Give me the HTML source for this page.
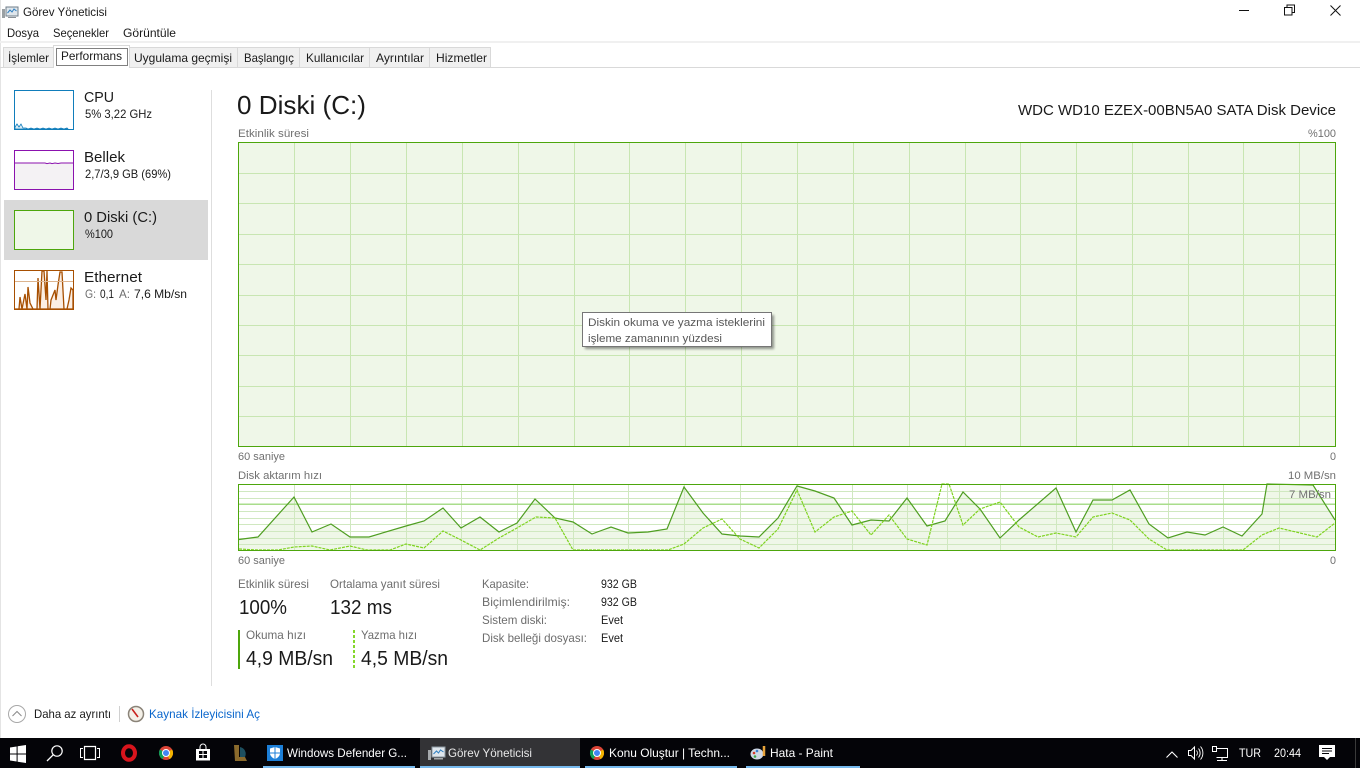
<!DOCTYPE html>
<html lang="tr"><head><meta charset="utf-8"><title>Görev Yöneticisi</title>
<style>
html,body{margin:0;padding:0;background:#fff;overflow:hidden}
svg{display:block}
text{font-family:"Liberation Sans",sans-serif;font-size:12px;fill:#1a1a1a}
.g{fill:#707070;font-size:11px}
.l{fill:#6d6d6d;font-size:12px}
.w{fill:#fff;font-size:12px}
.v{fill:#1a1a1a;font-size:20px}
</style></head><body>
<svg width="1360" height="768" viewBox="0 0 1360 768" xmlns="http://www.w3.org/2000/svg">
<defs><filter id="b" x="-10%" y="-30%" width="120%" height="160%"><feGaussianBlur stdDeviation="1.2"/></filter></defs>
<rect width="1360" height="768" fill="#fff"/>
<rect x="0" y="0" width="1" height="738" fill="#e4e4e4"/>

<!-- title bar -->
<g>
<rect x="6" y="7" width="12" height="9" fill="#dfe6ec" stroke="#6f7d88"/>
<path d="M7.5 13l2.5-3 2 2 2-3 2.5 2" fill="none" stroke="#2f7fc0"/>
<rect x="2" y="9" width="3" height="9" fill="#9aa0a3"/>
<rect x="8" y="17" width="8" height="1" fill="#8a9096"/>
</g>
<text x="23" y="16" textLength="84" lengthAdjust="spacingAndGlyphs">Görev Yöneticisi</text>
<path d="M1239 10.5h10" stroke="#111" fill="none"/>
<path d="M1284.5 7.5h7.5v7.5h-7.5zM1287 7.5v-2.5h7.5v7.5h-2.5" stroke="#111" fill="none"/>
<path d="M1330.5 5.5l10 10M1340.5 5.5l-10 10" stroke="#111" fill="none"/>

<!-- menu -->
<text x="7" y="37" textLength="32" lengthAdjust="spacingAndGlyphs">Dosya</text>
<text x="53" y="37" textLength="56" lengthAdjust="spacingAndGlyphs">Seçenekler</text>
<text x="123" y="37" textLength="53" lengthAdjust="spacingAndGlyphs">Görüntüle</text>
<rect x="0" y="41" width="1360" height="2" fill="#f0f0f0"/>

<!-- tabs -->
<rect x="0" y="67" width="1360" height="1" fill="#d9d9d9"/>
<g fill="#f0f0f0" stroke="#d9d9d9">
<rect x="3.5" y="47.5" width="50" height="20"/>
<rect x="129.5" y="47.5" width="108" height="20"/>
<rect x="237.5" y="47.5" width="62" height="20"/>
<rect x="299.5" y="47.5" width="70" height="20"/>
<rect x="369.5" y="47.5" width="60" height="20"/>
<rect x="429.5" y="47.5" width="61" height="20"/>
</g>
<path d="M53.5 68V45.5h76V68" fill="#fff" stroke="#d9d9d9"/>
<rect x="56.5" y="48.5" width="71" height="17" fill="none" stroke="#000" stroke-dasharray="1 1"/>
<text x="8" y="62" textLength="41" lengthAdjust="spacingAndGlyphs">İşlemler</text>
<text x="61" y="60" textLength="61" lengthAdjust="spacingAndGlyphs">Performans</text>
<text x="134" y="62" textLength="98" lengthAdjust="spacingAndGlyphs">Uygulama geçmişi</text>
<text x="244" y="62" textLength="50" lengthAdjust="spacingAndGlyphs">Başlangıç</text>
<text x="306" y="62" textLength="58" lengthAdjust="spacingAndGlyphs">Kullanıcılar</text>
<text x="376" y="62" textLength="48" lengthAdjust="spacingAndGlyphs">Ayrıntılar</text>
<text x="436" y="62" textLength="51" lengthAdjust="spacingAndGlyphs">Hizmetler</text>

<!-- sidebar -->
<rect x="4" y="200" width="204" height="60" fill="#d9d9d9"/>
<rect x="211" y="90" width="1" height="596" fill="#dedede"/>

<rect x="14.5" y="90.5" width="59" height="39" fill="#fff" stroke="#117dbb"/>
<path d="M15 129V127l2-3 2 3 2-3 2 4 3 0 2 1 3-1 3 1 3-1 3 1 3-1 3 1 3-1 3 1 3-1 3 1 3-1 3 1 3-1 1 1V129z" fill="#d9ebf5" stroke="#117dbb" stroke-width=".8"/>
<rect x="14.5" y="150.5" width="59" height="39" fill="#fff" stroke="#8b12ae"/>
<path d="M15 163H45l2 .6 3-.6 2 .6 3-.6 3 .5 3-.5H73V189H15z" fill="#f4f2f4" stroke="none"/>
<path d="M15 163H45l2 .6 3-.6 2 .6 3-.6 3 .5 3-.5H73" fill="none" stroke="#8b12ae"/>
<rect x="14.5" y="210.5" width="59" height="39" fill="#eff7e8" stroke="#4da60c"/>
<rect x="14.5" y="270.5" width="59" height="39" fill="#fff" stroke="#a74f01"/>
<path d="M15 309h4l1-12 2 12 3-15 2 15 1-22 2 16 3 6h4l1-31 2 31 2-38h2l2 29 1-29 1 38h2l1-9 2-5 2-5 1 10 2-15 2-13h2l2 37h3l2-9 2-12 2 2V309z" fill="#fbeee3" stroke="#a74f01" stroke-width="1.3"/>
<path d="M15 281.5h58" stroke="#dcb48f" fill="none"/>

<text x="84" y="102" style="font-size:15px" textLength="30" lengthAdjust="spacingAndGlyphs">CPU</text>
<text x="85" y="118" textLength="67" lengthAdjust="spacingAndGlyphs">5% 3,22 GHz</text>
<text x="84" y="162" style="font-size:15px" textLength="41" lengthAdjust="spacingAndGlyphs">Bellek</text>
<text x="85" y="178" textLength="86" lengthAdjust="spacingAndGlyphs">2,7/3,9 GB (69%)</text>
<text x="84" y="222" style="font-size:15px" textLength="73" lengthAdjust="spacingAndGlyphs">0 Diski (C:)</text>
<text x="85" y="238" textLength="28" lengthAdjust="spacingAndGlyphs">%100</text>
<text x="84" y="282" style="font-size:15px" textLength="58" lengthAdjust="spacingAndGlyphs">Ethernet</text>
<text x="85" y="298" class="l" textLength="11" lengthAdjust="spacingAndGlyphs">G:</text>
<text x="100" y="298" textLength="14" lengthAdjust="spacingAndGlyphs">0,1</text>
<text x="119" y="298" class="l" textLength="11" lengthAdjust="spacingAndGlyphs">A:</text>
<text x="134" y="298" textLength="53" lengthAdjust="spacingAndGlyphs">7,6 Mb/sn</text>

<!-- header -->
<text x="237" y="114" style="font-size:26px" textLength="129" lengthAdjust="spacingAndGlyphs">0 Diski (C:)</text>
<text x="1018" y="115" style="font-size:15px" textLength="318" lengthAdjust="spacingAndGlyphs">WDC WD10 EZEX-00BN5A0 SATA Disk Device</text>

<!-- chart 1 -->
<text x="238" y="137" class="g" textLength="71" lengthAdjust="spacingAndGlyphs">Etkinlik süresi</text>
<text x="1308" y="137" class="g" textLength="28" lengthAdjust="spacingAndGlyphs">%100</text>
<rect x="238.5" y="142.5" width="1097" height="304" fill="#eff7e8"/>
<path d="M294.5 143V446M350.5 143V446M406.5 143V446M462.5 143V446M518.5 143V446M574.5 143V446M629.5 143V446M685.5 143V446M741.5 143V446M797.5 143V446M853.5 143V446M909.5 143V446M965.5 143V446M1020.5 143V446M1076.5 143V446M1132.5 143V446M1188.5 143V446M1243.5 143V446M1299.5 143V446M239 173.5H1335M239 203.5H1335M239 234.5H1335M239 264.5H1335M239 295.5H1335M239 325.5H1335M239 355.5H1335M239 386.5H1335M239 416.5H1335" stroke="#c8e6b2" fill="none"/>
<rect x="238.5" y="142.5" width="1097" height="304" fill="none" stroke="#4da60c"/>
<text x="238" y="460" class="g" textLength="47" lengthAdjust="spacingAndGlyphs">60 saniye</text>
<text x="1330" y="460" class="g" textLength="6" lengthAdjust="spacingAndGlyphs">0</text>

<!-- tooltip -->
<rect x="585" y="315" width="189" height="34" fill="#000" opacity=".4" filter="url(#b)"/>
<rect x="582.5" y="312.5" width="189" height="34" fill="#fff" stroke="#767676"/>
<text x="588" y="326" class="g" style="fill:#575757" textLength="177" lengthAdjust="spacingAndGlyphs">Diskin okuma ve yazma isteklerini</text>
<text x="588" y="342" class="g" style="fill:#575757" textLength="134" lengthAdjust="spacingAndGlyphs">işleme zamanının yüzdesi</text>

<!-- chart 2 -->
<text x="238" y="479" class="g" textLength="84" lengthAdjust="spacingAndGlyphs">Disk aktarım hızı</text>
<text x="1288" y="479" class="g" textLength="48" lengthAdjust="spacingAndGlyphs">10 MB/sn</text>
<path d="M239 539.5L258 537L294 497L312 532L331 524L350 537L369 537L406 526L424 521L443 508L461 528L480 517L499 532L517 523L535 499L555 518L573 522L592 534L600 531L611 527L628 533L648 532L667 529L684 487L703 513L722 534L740 536L759 537L778 518L797 486L815 491L834 498L852 525L871 520L889 521L907 498L927 526L945 521L963 492L980 509L1000 538L1019 520L1056 488L1076 532L1093 500L1112 500L1130 490L1149 524L1168 538L1187 532L1205 535L1223 527L1242 536L1262 514L1267 484L1313 485L1335 520V550H239z" fill="#eff7e8"/>
<path d="M294.5 485V550M350.5 485V550M406.5 485V550M461.5 485V550M517.5 485V550M573.5 485V550M628.5 485V550M684.5 485V550M740.5 485V550M797.5 485V550M852.5 485V550M907.5 485V550M947.5 485V550M1000.5 485V550M1056.5 485V550M1112.5 485V550M1168.5 485V550M1223.5 485V550M1279.5 485V550M239 491.5H1335M239 498.5H1335M239 511.5H1335M239 518.5H1335M239 524.5H1335M239 531.5H1335M239 538.5H1335M239 544.5H1335" stroke="#d0e8c0" fill="none"/>
<rect x="239" y="503.500" width="1096" height="1.500" fill="#a9dd8c"/>
<path d="M239 539.5L258 537L294 497L312 532L331 524L350 537L369 537L406 526L424 521L443 508L461 528L480 517L499 532L517 523L535 499L555 518L573 522L592 534L600 531L611 527L628 533L648 532L667 529L684 487L703 513L722 534L740 536L759 537L778 518L797 486L815 491L834 498L852 525L871 520L889 521L907 498L927 526L945 521L963 492L980 509L1000 538L1019 520L1056 488L1076 532L1093 500L1112 500L1130 490L1149 524L1168 538L1187 532L1205 535L1223 527L1242 536L1262 514L1267 484L1313 485L1335 520" fill="none" stroke="#4f9e22" stroke-width="1.200"/>
<path d="M239 549L258 550L278 550L294 547L312 546L330 550L350 546L367 550L390 550L406 544L424 548L443 531L461 540L480 550L499 538L517 528L536 517L555 518L573 550L592 550L620 550L668 550L684 544L703 528L722 519L740 539L759 548L778 529L797 490L815 532L834 517L852 511L871 535L889 515L907 539L927 545L942 484L949 484L963 525L980 509L1000 502L1019 527L1038 537L1056 533L1076 537L1093 517L1112 513L1130 520L1149 539L1167 550L1197 550L1243 550L1262 535L1279 528L1317 537L1335 523" fill="none" stroke="#7fd320" stroke-width="1.200" stroke-dasharray="3 1"/>
<rect x="238.5" y="484.5" width="1097" height="66" fill="none" stroke="#4da60c"/>
<text x="1289" y="498" class="g" textLength="42" lengthAdjust="spacingAndGlyphs">7 MB/sn</text>
<text x="238" y="564" class="g" textLength="47" lengthAdjust="spacingAndGlyphs">60 saniye</text>
<text x="1330" y="564" class="g" textLength="6" lengthAdjust="spacingAndGlyphs">0</text>

<!-- stats -->
<text x="238" y="588" class="l" textLength="71" lengthAdjust="spacingAndGlyphs">Etkinlik süresi</text>
<text x="330" y="588" class="l" textLength="110" lengthAdjust="spacingAndGlyphs">Ortalama yanıt süresi</text>
<text x="239" y="614" class="v" textLength="48" lengthAdjust="spacingAndGlyphs">100%</text>
<text x="330" y="614" class="v" textLength="62" lengthAdjust="spacingAndGlyphs">132 ms</text>
<rect x="238" y="630" width="2" height="39" fill="#4da60c"/>
<path d="M354 630V669" stroke="#86d62c" stroke-width="2" stroke-dasharray="3 2" fill="none"/>
<text x="246" y="639" class="l" textLength="60" lengthAdjust="spacingAndGlyphs">Okuma hızı</text>
<text x="361" y="639" class="l" textLength="56" lengthAdjust="spacingAndGlyphs">Yazma hızı</text>
<text x="246" y="665" class="v" textLength="87" lengthAdjust="spacingAndGlyphs">4,9 MB/sn</text>
<text x="361" y="665" class="v" textLength="87" lengthAdjust="spacingAndGlyphs">4,5 MB/sn</text>
<text x="482" y="588" class="l" textLength="47" lengthAdjust="spacingAndGlyphs">Kapasite:</text>
<text x="482" y="606" class="l" textLength="88" lengthAdjust="spacingAndGlyphs">Biçimlendirilmiş:</text>
<text x="482" y="624" class="l" textLength="65" lengthAdjust="spacingAndGlyphs">Sistem diski:</text>
<text x="482" y="642" class="l" textLength="105" lengthAdjust="spacingAndGlyphs">Disk belleği dosyası:</text>
<text x="601" y="588" textLength="36" lengthAdjust="spacingAndGlyphs">932 GB</text>
<text x="601" y="606" textLength="36" lengthAdjust="spacingAndGlyphs">932 GB</text>
<text x="601" y="624" textLength="22" lengthAdjust="spacingAndGlyphs">Evet</text>
<text x="601" y="642" textLength="22" lengthAdjust="spacingAndGlyphs">Evet</text>

<!-- footer -->
<circle cx="17" cy="714" r="8.5" fill="#fff" stroke="#a8a8a8"/>
<path d="M12.5 716l4.5-4.5 4.5 4.5" fill="none" stroke="#8a8a8a"/>
<text x="34" y="718" textLength="77" lengthAdjust="spacingAndGlyphs">Daha az ayrıntı</text>
<rect x="119" y="706" width="1" height="16" fill="#d0d0d0"/>
<circle cx="136" cy="714" r="7.500" fill="#f4f0e8" stroke="#8a8378" stroke-width="1.500"/>
<path d="M132 709l6 8" stroke="#c8201c" stroke-width="1.600" fill="none"/>
<text x="149" y="718" style="fill:#0a66cc" textLength="111" lengthAdjust="spacingAndGlyphs">Kaynak İzleyicisini Aç</text>

<!-- taskbar -->
<rect x="0" y="738" width="1360" height="30" fill="#040408"/>
<path d="M10 747.500l6.600-1v7h-6.600zM17.600 746.300l8.400-1.300v8.500h-8.400zM10 754.500h6.600v7l-6.600-1zM17.600 754.500H26V763l-8.400-1.300z" fill="#fff"/>
<circle cx="57" cy="751" r="5.200" fill="none" stroke="#fff" stroke-width="1.200"/>
<path d="M53.300 754.700l-6.300 6.300" stroke="#fff" stroke-width="1.300" fill="none"/>
<path d="M84.500 746.500h11v13h-11z" fill="none" stroke="#fff" stroke-width="1.200"/>
<path d="M83 748.500h-2.500v9H83M97 748.500h2.500v9H97" fill="none" stroke="#fff"/>
<ellipse cx="129" cy="753" rx="6" ry="6.800" fill="none" stroke="#d8141c" stroke-width="4"/>
<circle cx="166" cy="753" r="7" fill="#db4437"/>
<path d="M166 753L159.900 749.500A7 7 0 0 0 162.500 759.100z" fill="#0f9d58"/>
<path d="M166 753L169.500 759.100A7 7 0 0 0 172.100 749.500z" fill="#f4b400"/>
<circle cx="166" cy="753" r="3.500" fill="#4285f4" stroke="#fff"/>
<path d="M196 749h14v11.500h-14z" fill="#fff"/>
<path d="M200 749v-2a3 3 0 0 1 6 0v2" fill="none" stroke="#fff"/>
<path d="M199 751h3.500v3H199zM203.500 751H207v3h-3.500zM199 755h3.500v3H199zM203.500 755H207v3h-3.500z" fill="#040408"/>
<path d="M234 745h5v12h6l2 4h-12z" fill="#8a6a2c"/>
<path d="M240 747a7 7 0 0 1 5 10h-5z" fill="#1d4f5f"/>

<rect x="263" y="766" width="152" height="2" fill="#76b9ed"/>
<rect x="267" y="745" width="16" height="16" fill="#1c7fd8"/>
<path d="M275 747l5 1.500v4.500c0 3-2.500 5-5 6-2.500-1-5-3-5-6v-4.500z" fill="#fff"/>
<path d="M275 747v12M270 753h10" stroke="#1c7fd8" fill="none"/>
<text x="287" y="757" class="w" textLength="120" lengthAdjust="spacingAndGlyphs">Windows Defender G...</text>

<rect x="420" y="738" width="160" height="30" fill="#333336"/>
<rect x="420" y="766" width="160" height="2" fill="#76b9ed"/>
<rect x="432" y="747" width="13" height="10" fill="#dfe6ec" stroke="#8d98a2"/>
<path d="M433.500 754l3-3 2 2 2-3 3 2" fill="none" stroke="#2f7fc0"/>
<rect x="428" y="750" width="3" height="10" fill="#a4a8ab"/>
<rect x="434" y="758" width="9" height="1.500" fill="#a4a8ab"/>
<text x="448" y="757" class="w" style="fill:#e8e8e8" textLength="84" lengthAdjust="spacingAndGlyphs">Görev Yöneticisi</text>

<rect x="585" y="766" width="152" height="2" fill="#76b9ed"/>
<circle cx="597" cy="753" r="7" fill="#db4437"/>
<path d="M597 753L590.900 749.500A7 7 0 0 0 593.500 759.100z" fill="#0f9d58"/>
<path d="M597 753L600.500 759.100A7 7 0 0 0 603.100 749.500z" fill="#f4b400"/>
<circle cx="597" cy="753" r="3.500" fill="#4285f4" stroke="#fff"/>
<text x="609" y="757" class="w" textLength="121" lengthAdjust="spacingAndGlyphs">Konu Oluştur | Techn...</text>

<rect x="746" y="766" width="114" height="2" fill="#76b9ed"/>
<ellipse cx="757" cy="754" rx="6.500" ry="5.500" fill="#cfd8e6"/>
<circle cx="754" cy="753" r="1.300" fill="#d23a2a"/>
<circle cx="757" cy="751" r="1.300" fill="#3a7fd2"/>
<circle cx="755" cy="756.500" r="1.300" fill="#3ea84a"/>
<path d="M764 746v10" stroke="#e8a33a" stroke-width="2.500" fill="none"/>
<text x="770" y="757" class="w" textLength="63" lengthAdjust="spacingAndGlyphs">Hata - Paint</text>

<!-- tray -->
<path d="M1166.500 757.500l5.500-5.500 5.500 5.500" fill="none" stroke="#fff" stroke-width="1.100"/>
<path d="M1188.500 750.500h2.500l3.500-3.500v12l-3.500-3.500h-2.500z" fill="none" stroke="#fff"/>
<path d="M1196.500 750.500a4 4 0 0 1 0 5M1198.500 748.500a7 7 0 0 1 0 9M1200.500 746.500a10 10 0 0 1 0 13" fill="none" stroke="#fff" stroke-width=".9"/>
<path d="M1216.500 748.500h11v9h-11M1222 757.500v3M1217 760.500h10" fill="none" stroke="#fff"/>
<rect x="1212.500" y="746.500" width="4" height="5" fill="none" stroke="#fff"/>
<text x="1239" y="757" class="w" textLength="22" lengthAdjust="spacingAndGlyphs">TUR</text>
<text x="1274" y="757" class="w" textLength="27" lengthAdjust="spacingAndGlyphs">20:44</text>
<path d="M1319 745h16v12h-5l-3 3-3-3h-5z" fill="#fff"/>
<path d="M1322 748.500h10M1322 751h10M1322 753.500h7" stroke="#040408" fill="none"/>
<rect x="1355" y="738" width="1" height="30" fill="#3a3a3a"/>
</svg>
</body></html>
